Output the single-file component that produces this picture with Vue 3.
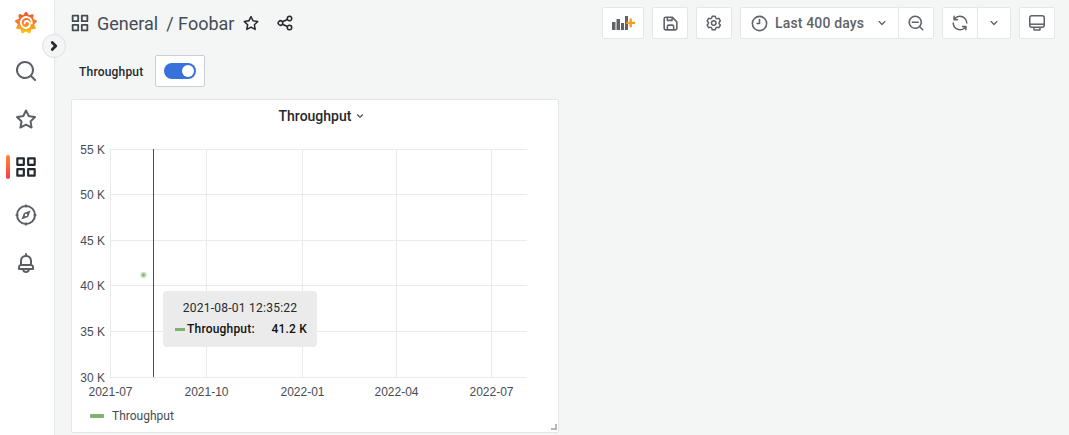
<template>
  <div class="page">
    <aside class="sidemenu">
      <div class="logo">
        <svg width="22" height="23" viewBox="0 0 24 25">
          <defs>
            <linearGradient id="flame" x1="0" y1="0" x2="0" y2="1">
              <stop offset="0" stop-color="#ee4f2c" />
              <stop offset="0.55" stop-color="#f7872a" />
              <stop offset="1" stop-color="#fbca0a" />
            </linearGradient>
          </defs>
          <path :d="logoPath" fill="url(#flame)" />
          <path d="M18.2 13.6a6 6 0 1 0-6.3 4.9a4.3 4.3 0 0 0 4.3-4.6a3.3 3.3 0 0 0-3.6-3a2.4 2.4 0 0 0-2.1 2.4" fill="none" stroke="#fff" stroke-width="2" stroke-linecap="round" />
        </svg>
      </div>
      <button class="expand">
        <svg width="20" height="20" viewBox="0 0 24 24"><path :d="icons.angleRight" fill="#24292e" stroke="#24292e" stroke-width="1.3" /></svg>
      </button>
      <div v-for="item in navItems" :key="item.name" class="nav-item" :class="{ active: item.active }">
        <svg :width="item.size" :height="item.size" viewBox="0 0 24 24" class="nav-icon">
          <path :d="icons[item.name]" />
          <template v-if="item.name === 'compass'">
            <path d="M12 1.5v3M12 19.5v3M1.5 12h3M19.5 12h3" stroke="currentColor" stroke-width="1.6" />
          </template>
        </svg>
      </div>
    </aside>

    <main class="main">
      <header class="toolbar">
        <div class="crumbs">
          <svg class="crumb-icon" width="22" height="22" viewBox="0 0 24 24"><path :d="icons.apps" /></svg>
          <span class="crumb-title">General</span>
          <span class="crumb-title slash">/ Foobar</span>
          <svg class="crumb-icon star" width="18" height="18" viewBox="0 0 24 24"><path :d="icons.star" /></svg>
          <svg class="crumb-icon share" width="18" height="18" viewBox="0 0 24 24"><path :d="icons.share" /></svg>
        </div>
        <div class="actions">
          <button class="tb-btn add-panel">
            <svg width="25" height="18" viewBox="0 0 25 18">
              <path d="M1 8h3.500v8H1zM5.500 5h3.500v11H5.500zM10 9h3v7h-3zM14 2h3v14h-3z" fill="#5f6368" />
              <path d="M18.500 4.500h2.400v3.200h3.200v2.400h-3.200v3.200h-2.400v-3.200h-3.200V7.700h3.200z" fill="#f59e1c" />
            </svg>
          </button>
          <button class="tb-btn square"><svg class="tb-icon" width="19" height="19" viewBox="0 0 24 24"><path :d="icons.save" /></svg></button>
          <button class="tb-btn square"><svg class="tb-icon" width="18" height="18" viewBox="0 0 24 24"><path :d="icons.cog" /></svg></button>
          <div class="group">
            <button class="tb-btn time">
              <svg class="tb-icon" width="19" height="19" viewBox="0 0 24 24"><path :d="icons.clock" /></svg>
              <span class="time-label">Last 400 days</span>
              <svg class="tb-icon caret" width="16" height="16" viewBox="0 0 24 24"><path :d="icons.angleDown" /></svg>
            </button>
            <button class="tb-btn square joined"><svg class="tb-icon" width="18" height="18" viewBox="0 0 24 24"><path :d="icons.zoomOut" /></svg></button>
          </div>
          <div class="group">
            <button class="tb-btn refresh"><svg class="tb-icon" width="18" height="18" viewBox="0 0 24 24"><path :d="icons.sync" /></svg></button>
            <button class="tb-btn refresh-menu joined"><svg class="tb-icon" width="16" height="16" viewBox="0 0 24 24"><path :d="icons.angleDown" /></svg></button>
          </div>
          <button class="tb-btn square">
            <svg width="18" height="18" viewBox="0 0 18 18" fill="none" stroke="#5f6368" stroke-width="1.5">
              <rect x="1.750" y="1.750" width="14.500" height="11.500" rx="2" />
              <path d="M2 10.200h14" />
              <path d="M6 14v1.500a.5.5 0 0 0 .5.5h5a.5.5 0 0 0 .5-.5V14" />
            </svg>
          </button>
        </div>
      </header>

      <div class="submenu">
        <label class="var-label">Throughput</label>
        <div class="switch-box"><span class="switch"><span class="knob"></span></span></div>
      </div>

      <section class="panel">
        <div class="panel-head">
          <span class="panel-title">Throughput</span>
          <svg class="panel-caret" width="14" height="14" viewBox="0 0 24 24"><path :d="icons.angleDown" /></svg>
        </div>
        <svg class="plot" width="485" height="268" viewBox="72 133 485 268">
          <line v-for="t in yTicks" :key="t.label" x1="110" x2="527" :y1="t.y" :y2="t.y" class="grid" />
          <line v-for="t in xLines" :key="t" :x1="t" :x2="t" y1="149" y2="377" class="grid" />
          <text v-for="t in yTicks" :key="'y' + t.label" x="105" :y="t.y + 4" text-anchor="end" class="tick">{{ t.label }}</text>
          <text v-for="t in xTicks" :key="t.label" :x="t.x" y="396" text-anchor="middle" class="tick">{{ t.label }}</text>
          <line x1="153.500" x2="153.500" y1="149" y2="377" class="cross" />
          <circle cx="143.500" cy="275" r="3.200" fill="#7eb26d" fill-opacity="0.4" />
          <circle cx="143.500" cy="275" r="1.400" fill="#7eb26d" />
        </svg>
        <div class="legend">
          <span class="legend-dash"></span>
          <span class="legend-text">Throughput</span>
        </div>
        <div class="tooltip">
          <div class="tooltip-time">2021-08-01 12:35:22</div>
          <div class="tooltip-row">
            <span class="tooltip-dash"></span>
            <span class="tooltip-name">Throughput:</span>
            <span class="tooltip-value">41.2 K</span>
          </div>
        </div>
        <span class="resize"></span>
      </section>
    </main>
  </div>
</template>

<script setup>
const icons = {
  search: 'M21.71,20.29,18,16.61A9,9,0,1,0,16.61,18l3.68,3.68a1,1,0,0,0,1.42,0A1,1,0,0,0,21.71,20.29ZM11,18a7,7,0,1,1,7-7A7,7,0,0,1,11,18Z',
  star: 'M22,9.67A1,1,0,0,0,21.14,9l-5.69-.83L12.9,3a1,1,0,0,0-1.8,0L8.55,8.16,2.86,9a1,1,0,0,0-.81.68,1,1,0,0,0,.25,1L6.43,14.7l-1,5.68A1,1,0,0,0,6.9,21.44L12,18.77l5.1,2.67a.93.93,0,0,0,.46.12,1,1,0,0,0,.59-.19,1,1,0,0,0,.4-1l-1-5.68,4.13-4A1,1,0,0,0,22,9.67Zm-6.15,4a1,1,0,0,0-.29.88l.72,4.2-3.76-2a1.06,1.06,0,0,0-.94,0l-3.76,2,.72-4.2a1,1,0,0,0-.29-.88l-3-3,4.21-.61a1,1,0,0,0,.76-.55L12,5.7l1.88,3.82a1,1,0,0,0,.76.55l4.21.61Z',
  apps: 'M10,13H4a1,1,0,0,0-1,1v6a1,1,0,0,0,1,1h6a1,1,0,0,0,1-1V14A1,1,0,0,0,10,13ZM9,19H5V15H9ZM20,3H14a1,1,0,0,0-1,1v6a1,1,0,0,0,1,1h6a1,1,0,0,0,1-1V4A1,1,0,0,0,20,3ZM19,9H15V5h4Zm1,4H14a1,1,0,0,0-1,1v6a1,1,0,0,0,1,1h6a1,1,0,0,0,1-1V14A1,1,0,0,0,20,13Zm-1,6H15V15h4ZM10,3H4A1,1,0,0,0,3,4v6a1,1,0,0,0,1,1h6a1,1,0,0,0,1-1V4A1,1,0,0,0,10,3ZM9,9H5V5H9Z',
  compass: 'M12,2A10,10,0,1,0,22,12,10,10,0,0,0,12,2Zm0,18a8,8,0,1,1,8-8A8,8,0,0,1,12,20ZM16.6,7.4,9.9,9.9,7.4,16.6l6.7-2.500ZM12,13.200A1.200,1.200,0,1,1,13.200,12,1.200,1.200,0,0,1,12,13.200Z',
  bell: 'M18,13.18V10a6,6,0,0,0-5-5.91V3a1,1,0,0,0-2,0V4.09A6,6,0,0,0,6,10v3.18A3,3,0,0,0,4,16v2a1,1,0,0,0,1,1H8.14a4,4,0,0,0,7.72,0H19a1,1,0,0,0,1-1V16A3,3,0,0,0,18,13.18ZM8,10a4,4,0,0,1,8,0v3H8ZM12,20a2,2,0,0,1-1.72-1h3.44A2,2,0,0,1,12,20Zm6-3H6V16a1,1,0,0,1,1-1H17a1,1,0,0,1,1,1Z',
  share: 'M18,14a4,4,0,0,0-3.08,1.48l-5.1-2.35a3.64,3.64,0,0,0,0-2.26l5.1-2.35A4,4,0,1,0,14,6a4.17,4.17,0,0,0,.07.71L8.79,9.14a4,4,0,1,0,0,5.72l5.28,2.43A4.17,4.17,0,0,0,14,18a4,4,0,1,0,4-4ZM18,4a2,2,0,1,1-2,2A2,2,0,0,1,18,4ZM6,14a2,2,0,1,1,2-2A2,2,0,0,1,6,14Zm12,6a2,2,0,1,1,2-2A2,2,0,0,1,18,20Z',
  save: 'M20.71,9.29l-6-6a1,1,0,0,0-.32-.21A1.09,1.09,0,0,0,14,3H6A3,3,0,0,0,3,6V18a3,3,0,0,0,3,3H18a3,3,0,0,0,3-3V10A1,1,0,0,0,20.71,9.29ZM9,5h4V7H9Zm6,14H9V16a1,1,0,0,1,1-1h4a1,1,0,0,1,1,1Zm4-1a1,1,0,0,1-1,1H17V16a3,3,0,0,0-3-3H10a3,3,0,0,0-3,3v3H6a1,1,0,0,1-1-1V6A1,1,0,0,1,6,5H7V8A1,1,0,0,0,8,9h6a1,1,0,0,0,1-1V6.41l4,4Z',
  cog: 'M19.9,12.66a1,1,0,0,1,0-1.32L21.18,9.9a1,1,0,0,0,.12-1.17l-2-3.46a1,1,0,0,0-1.07-.48l-1.88.38a1,1,0,0,1-1.15-.66l-.61-1.83A1,1,0,0,0,13.64,2h-4a1,1,0,0,0-1,.68L8.08,4.51a1,1,0,0,1-1.15.66L5,4.79A1,1,0,0,0,4,5.27L2,8.73A1,1,0,0,0,2.1,9.9l1.27,1.44a1,1,0,0,1,0,1.32L2.1,14.1A1,1,0,0,0,2,15.27l2,3.46a1,1,0,0,0,1.07.48l1.88-.38a1,1,0,0,1,1.15.66l.61,1.83a1,1,0,0,0,1,.68h4a1,1,0,0,0,.95-.68l.61-1.83a1,1,0,0,1,1.15-.66l1.88.38a1,1,0,0,0,1.07-.48l2-3.46a1,1,0,0,0-.12-1.17ZM18.41,14l.8.9-1.28,2.22-1.18-.24a3,3,0,0,0-3.45,2L12.92,20H10.36L10,18.86a3,3,0,0,0-3.45-2l-1.18.24L4.07,14.89l.8-.9a3,3,0,0,0,0-4l-.8-.9L5.35,6.89l1.18.24a3,3,0,0,0,3.45-2L10.36,4h2.56l.38,1.14a3,3,0,0,0,3.45,2l1.18-.24,1.28,2.22-.8.9A3,3,0,0,0,18.41,14ZM11.64,8a4,4,0,1,0,4,4A4,4,0,0,0,11.64,8Zm0,6a2,2,0,1,1,2-2A2,2,0,0,1,11.64,14Z',
  clock: 'M12,2A10,10,0,1,0,22,12,10.01146,10.01146,0,0,0,12,2Zm0,18a8,8,0,1,1,8-8A8.00917,8.00917,0,0,1,12,20Zm0-14a1,1,0,0,0-1,1v4H9a1,1,0,0,0,0,2h3a1,1,0,0,0,1-1V7A1,1,0,0,0,12,6Z',
  zoomOut: 'M21.71,20.29,18,16.61A9,9,0,1,0,16.61,18l3.68,3.68a1,1,0,0,0,1.42,0A1,1,0,0,0,21.71,20.29ZM11,18a7,7,0,1,1,7-7A7,7,0,0,1,11,18Zm4-8H7a1,1,0,0,0,0,2h8a1,1,0,0,0,0-2Z',
  sync: 'M19.91,15.51H15.38a1,1,0,0,0,0,2h2.4A8,8,0,0,1,4,12a1,1,0,0,0-2,0,10,10,0,0,0,16.88,7.23V21a1,1,0,0,0,2,0V16.5A1,1,0,0,0,19.91,15.51ZM12,2A10,10,0,0,0,5.12,4.77V3a1,1,0,0,0-2,0V7.5a1,1,0,0,0,1,1h4.5a1,1,0,0,0,0-2H6.22A8,8,0,0,1,20,12a1,1,0,0,0,2,0A10,10,0,0,0,12,2Z',
  angleDown: 'M17,9.17a1,1,0,0,0-1.41,0L12,12.71,8.46,9.17a1,1,0,0,0-1.41,0,1,1,0,0,0,0,1.42l4.24,4.24a1,1,0,0,0,1.42,0L17,10.59A1,1,0,0,0,17,9.17Z',
  angleRight: 'M14.83,11.29,10.59,7.05a1,1,0,0,0-1.42,0,1,1,0,0,0,0,1.41L12.71,12,9.17,15.54a1,1,0,0,0,0,1.41,1,1,0,0,0,.71.29,1,1,0,0,0,.71-.29l4.24-4.24A1,1,0,0,0,14.83,11.29Z'
};

const navItems = [
  { name: 'search', size: 24 },
  { name: 'star', size: 24 },
  { name: 'apps', size: 26, active: true },
  { name: 'compass', size: 24 },
  { name: 'bell', size: 24 }
];

// logo outline: a toothed wheel, teeth leaning clockwise
const logoPath = (() => {
  const teeth = 9;
  const cx = 12;
  const cy = 13;
  const points = [];
  for (let i = 0; i < teeth; i++) {
    const a = (i / teeth) * Math.PI * 2 - Math.PI / 2;
    const step = (Math.PI * 2) / teeth;
    [[9, -0.5], [12, -0.08], [12, 0.1], [9, 0.5]].forEach(([r, f]) => {
      const angle = a + f * step;
      points.push((cx + r * Math.cos(angle)).toFixed(2) + ' ' + (cy + r * Math.sin(angle)).toFixed(2));
    });
  }
  return 'M' + points.join('L') + 'Z';
})();

const yTicks = [
  { label: '55 K', y: 149.5 },
  { label: '50 K', y: 194.5 },
  { label: '45 K', y: 240.5 },
  { label: '40 K', y: 285.5 },
  { label: '35 K', y: 331.5 },
  { label: '30 K', y: 377.5 }
];
const xLines = [110.5, 206.5, 302.5, 396.5, 491.5];
const xTicks = [
  { label: '2021-07', x: 110.5 },
  { label: '2021-10', x: 206.5 },
  { label: '2022-01', x: 302.5 },
  { label: '2022-04', x: 396.5 },
  { label: '2022-07', x: 491.5 }
];
</script>

<style>
html, body { margin: 0; background: #f4f5f5; }
</style>

<style scoped>
.page {
  display: flex;
  width: 1069px;
  height: 435px;
  overflow: hidden;
  background: #f4f5f5;
  font-family: Roboto, "Liberation Sans", sans-serif;
  color: #464c54;
}

.sidemenu {
  position: relative;
  width: 54px;
  flex: none;
  background: #fff;
  border-right: 1px solid #e4e6e8;
}
.logo {
  height: 47px;
  display: flex;
  align-items: center;
  justify-content: center;
  padding: 0 2px 3px 0;
  box-sizing: border-box;
}
.expand {
  position: absolute;
  left: 42px;
  top: 34px;
  width: 24px;
  height: 24px;
  padding: 0;
  border-radius: 50%;
  border: 1px solid #dce1e6;
  background: #f4f5f5;
  display: flex;
  align-items: center;
  justify-content: center;
  z-index: 2;
}
.nav-item {
  position: relative;
  height: 48px;
  display: flex;
  align-items: center;
  justify-content: center;
  padding-right: 2px;
  box-sizing: border-box;
}
.nav-icon { fill: #5c6066; color: #5c6066; }
.nav-item.active .nav-icon { fill: #24292e; }
.nav-item.active::before {
  content: "";
  position: absolute;
  left: 6px;
  top: 12px;
  width: 4px;
  height: 24px;
  border-radius: 2px;
  background: linear-gradient(180deg, #ff8833, #f53e4c);
}

.main {
  flex: 1;
  min-width: 0;
  display: flex;
  flex-direction: column;
}
.toolbar {
  display: flex;
  align-items: center;
  justify-content: space-between;
  height: 32px;
  padding: 7px 14px 0 14px;
}
.crumbs { display: flex; align-items: center; }
.crumb-icon { fill: #464c54; flex: none; }
.crumb-title {
  font-size: 18px;
  color: #464c54;
  margin-left: 6px;
}
.slash { margin-left: 8px; }
.star { margin-left: 8px; fill: #24292e; }
.share { margin-left: 16px; fill: #24292e; }

.actions { display: flex; align-items: center; gap: 8px; }
.group { display: flex; }
.tb-btn {
  height: 32px;
  padding: 0;
  box-sizing: border-box;
  background: #fff;
  border: 1px solid #e4e6e8;
  border-radius: 2px;
  display: flex;
  align-items: center;
  justify-content: center;
  font-family: inherit;
}
.tb-icon { fill: #5f6368; flex: none; }
.square { width: 36px; }
.add-panel { width: 42px; }
.time { width: 159px; padding: 0 9px; justify-content: flex-start; }
.time-label {
  font-size: 14px;
  font-weight: 500;
  color: #5f6368;
  margin-left: 6px;
  letter-spacing: 0.15px;
}
.caret { margin-left: auto; margin-right: -1px; }
.joined { margin-left: -1px; }
.refresh { width: 36px; }
.refresh-menu { width: 34px; }

.submenu {
  display: flex;
  align-items: center;
  height: 32px;
  margin: 16px 0 0 16px;
}
.var-label {
  font-size: 12px;
  font-weight: 500;
  letter-spacing: 0.2px;
  color: #24292e;
  width: 76px;
  padding: 1px 0 0 8px;
  box-sizing: content-box;
}
.switch-box {
  width: 50px;
  height: 32px;
  box-sizing: border-box;
  background: #fff;
  border: 1px solid #c7d0d9;
  border-radius: 2px;
  display: flex;
  align-items: center;
  justify-content: center;
}
.switch {
  position: relative;
  width: 32px;
  height: 16px;
  border-radius: 8px;
  background: #3871dc;
}
.knob {
  position: absolute;
  right: 2px;
  top: 2px;
  width: 12px;
  height: 12px;
  border-radius: 50%;
  background: #fff;
}

.panel {
  position: relative;
  width: 488px;
  height: 334px;
  margin: 12px 0 0 16px;
  box-sizing: border-box;
  background: #fff;
  border: 1px solid #e4e6e8;
  border-radius: 2px;
  display: flex;
  flex-direction: column;
}
.panel-head {
  height: 33px;
  flex: none;
  display: flex;
  align-items: center;
  justify-content: center;
  padding: 0 0 2px 16px;
  box-sizing: border-box;
}
.panel-title { font-size: 14px; font-weight: 500; color: #24292e; }
.panel-caret { fill: #464c54; margin-left: 2px; }
.plot { display: block; flex: none; }
.grid { stroke: #e9eaeb; stroke-width: 1; }
.cross { stroke: #a3262c; stroke-width: 1; }
.tick {
  font-family: "Liberation Sans", Arial, sans-serif;
  font-size: 12px;
  fill: #464c54;
}
.legend {
  display: flex;
  align-items: center;
  padding: 8px 0 0 18px;
}
.legend-dash {
  width: 14px;
  height: 4px;
  background: #7eb26d;
  border-radius: 1px;
}
.legend-text { font-size: 12px; color: #464c54; margin-left: 8px; }

.tooltip {
  position: absolute;
  left: 91px;
  top: 191px;
  width: 154px;
  height: 56px;
  box-sizing: border-box;
  padding: 9px 10px 0 12px;
  background: #ebebeb;
  border-radius: 4px;
  font-size: 12px;
  letter-spacing: 0.2px;
  color: #24292e;
}
.tooltip-time { text-align: center; line-height: 16px; margin-left: -2px; letter-spacing: 0.25px; }
.tooltip-row { display: flex; align-items: center; margin-top: 5px; line-height: 16px; color: #111; font-weight: 500; }
.tooltip-dash { width: 10px; height: 3px; background: #7eb26d; flex: none; }
.tooltip-name { margin-left: 2px; }
.tooltip-value { margin-left: auto; }
.resize {
  position: absolute;
  right: 1px;
  bottom: 2px;
  width: 4px;
  height: 4px;
  border-right: 2px solid #b5b8bb;
  border-bottom: 2px solid #b5b8bb;
}
</style>
